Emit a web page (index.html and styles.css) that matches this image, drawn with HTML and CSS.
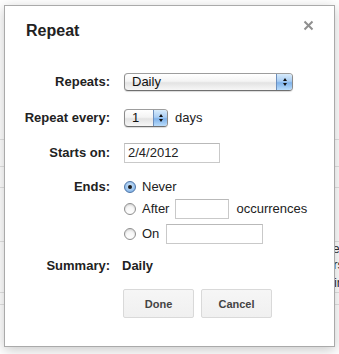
FILE: index.html
```html
<!DOCTYPE html>
<html>
<head>
<meta charset="utf-8">
<link rel="stylesheet" href="styles.css">
</head>
<body>
<div class="page">
  <div class="pg-row r1"></div>
  <div class="pg-row r2"></div>
  <div class="pg-row r3"></div>
  <div class="pg-row r4"></div>
  <div class="pg-row r5"><span class="frag">er</span></div>
  <div class="pg-row r6"><span class="frag">rs</span></div>
  <div class="pg-row r7"><span class="frag">in</span></div>
  <div class="pg-row r8"></div>
</div>

<div class="dialog">
  <div class="title">Repeat</div>
  <svg class="close" width="11" height="11" viewBox="0 0 11 11"><path d="M1.5 1.5 L9.5 9.5 M9.5 1.5 L1.5 9.5" stroke="#8f8f8f" stroke-width="2"/></svg>

  <div class="form">
    <div class="row h18">
      <div class="label">Repeats:</div>
      <div class="ctrl">
        <div class="select wide"><span class="sel-text">Daily</span><span class="sel-btn"><i class="up"></i><i class="down"></i></span></div>
      </div>
    </div>

    <div class="row h18 g18">
      <div class="label">Repeat every:</div>
      <div class="ctrl">
        <div class="select small"><span class="sel-text">1</span><span class="sel-btn"><i class="up"></i><i class="down"></i></span></div>
        <span class="txt days">days</span>
      </div>
    </div>

    <div class="row h20 g16">
      <div class="label">Starts on:</div>
      <div class="ctrl">
        <div class="input date">2/4/2012</div>
      </div>
    </div>

    <div class="row h18 g15">
      <div class="label">Ends:</div>
      <div class="ctrl">
        <span class="radio on"></span><span class="txt">Never</span>
      </div>
    </div>
    <div class="row h20 g3">
      <div class="label"></div>
      <div class="ctrl">
        <span class="radio"></span><span class="txt">After</span>
        <div class="input occ"></div>
        <span class="txt occ-t">occurrences</span>
      </div>
    </div>
    <div class="row h20 g5">
      <div class="label"></div>
      <div class="ctrl">
        <span class="radio"></span><span class="txt">On</span>
        <div class="input ondate"></div>
      </div>
    </div>

    <div class="row h18 g13">
      <div class="label">Summary:</div>
      <div class="ctrl">
        <span class="summary">Daily</span>
      </div>
    </div>

    <div class="row buttons">
      <div class="label"></div>
      <div class="ctrl btns">
        <div class="btn">Done</div>
        <div class="btn">Cancel</div>
      </div>
    </div>
  </div>
</div>
</body>
</html>
```

FILE: styles.css
```css
html, body {
  margin: 0;
  padding: 0;
}
body {
  width: 339px;
  height: 354px;
  overflow: hidden;
  background: #ffffff;
  font-family: "Liberation Sans", Arial, sans-serif;
  position: relative;
}

.page {
  display: flex;
  flex-direction: column;
}
.pg-row {
  border-bottom: 1px solid #e3e3e3;
  display: flex;
  justify-content: flex-end;
  font-size: 13px;
  color: #333;
  overflow: hidden;
}
.r1 { height: 139px; }
.r2 { height: 26px; }
.r3 { height: 20px; }
.r4 { height: 53px; }
.r5 { height: 14px; border-bottom: none; align-items: center; }
.r6 { height: 17px; border-bottom: none; align-items: center; }
.r7 { height: 19px; align-items: center; }
.r8 { height: 11px; }
.frag {
  margin-right: -5px;
  line-height: 14px;
}

.dialog {
  position: absolute;
  left: 4px;
  top: 5px;
  width: 329px;
  height: 340px;
  background: #fff;
  border: 1px solid #aaaaaa;
  box-shadow: 0 3px 12px rgba(0,0,0,0.22);
}

.title {
  margin: 15px 0 0 21px;
  font-size: 16px;
  line-height: 20px;
  font-weight: bold;
  color: #222;
}

.close {
  position: absolute;
  right: 20px;
  top: 14px;
}

.form {
  margin-top: 32px;
  display: flex;
  flex-direction: column;
}

.row {
  display: grid;
  grid-template-columns: 105px 1fr;
  column-gap: 14px;
  align-items: center;
}
.h18 { height: 18px; }
.h20 { height: 20px; }
.g18 { margin-top: 18px; }
.g16 { margin-top: 16px; }
.g15 { margin-top: 15px; }
.g13 { margin-top: 13px; }
.g5 { margin-top: 5px; }
.g3 { margin-top: 3px; }

.label {
  text-align: right;
  font-size: 13px;
  font-weight: bold;
  color: #222;
  line-height: 16px;
}

.ctrl {
  display: flex;
  align-items: center;
  font-size: 13px;
  color: #222;
  height: 100%;
}

.txt {
  line-height: 16px;
}

.select {
  box-sizing: border-box;
  height: 18px;
  border: 1px solid #8b8b8b;
  border-top-color: #9d9d9d;
  border-bottom-color: #6f6f6f;
  border-radius: 4px;
  background: linear-gradient(#ffffff 0%, #f4f4f4 45%, #e3e3e3 55%, #f7f7f7 100%);
  display: flex;
  align-items: center;
  overflow: hidden;
  box-shadow: 0 1px 1px rgba(0,0,0,0.15);
}
.select.wide { width: 169px; }
.select.small { width: 44px; }
.sel-text {
  flex: 1;
  padding-left: 7px;
  font-size: 13px;
  line-height: 16px;
  color: #111;
}
.sel-btn {
  width: 15px;
  height: 100%;
  border-left: 1px solid #6d8fbd;
  background: linear-gradient(#d8ebfb 0%, #a9cdf3 45%, #7fb2ea 55%, #b9dcfb 100%);
  display: flex;
  flex-direction: column;
  align-items: center;
  justify-content: center;
  gap: 2px;
}
.small .sel-btn { width: 13px; }
.sel-btn i {
  display: block;
  width: 0;
  height: 0;
  border-left: 2.5px solid transparent;
  border-right: 2.5px solid transparent;
}
.sel-btn .up { border-bottom: 3px solid #111; }
.sel-btn .down { border-top: 3px solid #111; }

.days { margin-left: 7px; }

.input {
  box-sizing: border-box;
  height: 20px;
  border: 1px solid #c9c9c9;
  border-top-color: #b9b9b9;
  background: #fff;
  font-size: 13px;
  line-height: 18px;
  padding-left: 3px;
  color: #222;
}
.date { width: 96px; }
.occ { width: 54px; margin-left: 6px; }
.occ-t { margin-left: 7px; }
.ondate { width: 97px; margin-left: 7px; }

.radio {
  box-sizing: border-box;
  width: 12px;
  height: 12px;
  border-radius: 50%;
  border: 1px solid #8e8e8e;
  background: linear-gradient(#f2f2f2, #ffffff);
  margin-right: 6px;
  box-shadow: inset 0 1px 2px rgba(0,0,0,0.15);
  display: flex;
  align-items: center;
  justify-content: center;
}
.radio.on {
  border-color: #4f76a8;
  background: radial-gradient(circle at 50% 40%, #d4e8fb, #6ea6e2);
  box-shadow: none;
}
.radio.on::after {
  content: "";
  width: 4px;
  height: 4px;
  border-radius: 50%;
  background: #1a1a1a;
}

.summary {
  margin-left: -2px;
  font-weight: bold;
  line-height: 16px;
}

.buttons {
  margin-top: 14px;
  height: 29px;
}
.btns {
  gap: 7px;
  margin-left: -1px;
}
.btn {
  box-sizing: border-box;
  width: 71px;
  height: 29px;
  border: 1px solid #d9d9d9;
  border-radius: 2px;
  background: linear-gradient(#f6f6f6, #f0f0f0);
  font-size: 11px;
  font-weight: bold;
  color: #444;
  display: flex;
  align-items: center;
  justify-content: center;
}
```
